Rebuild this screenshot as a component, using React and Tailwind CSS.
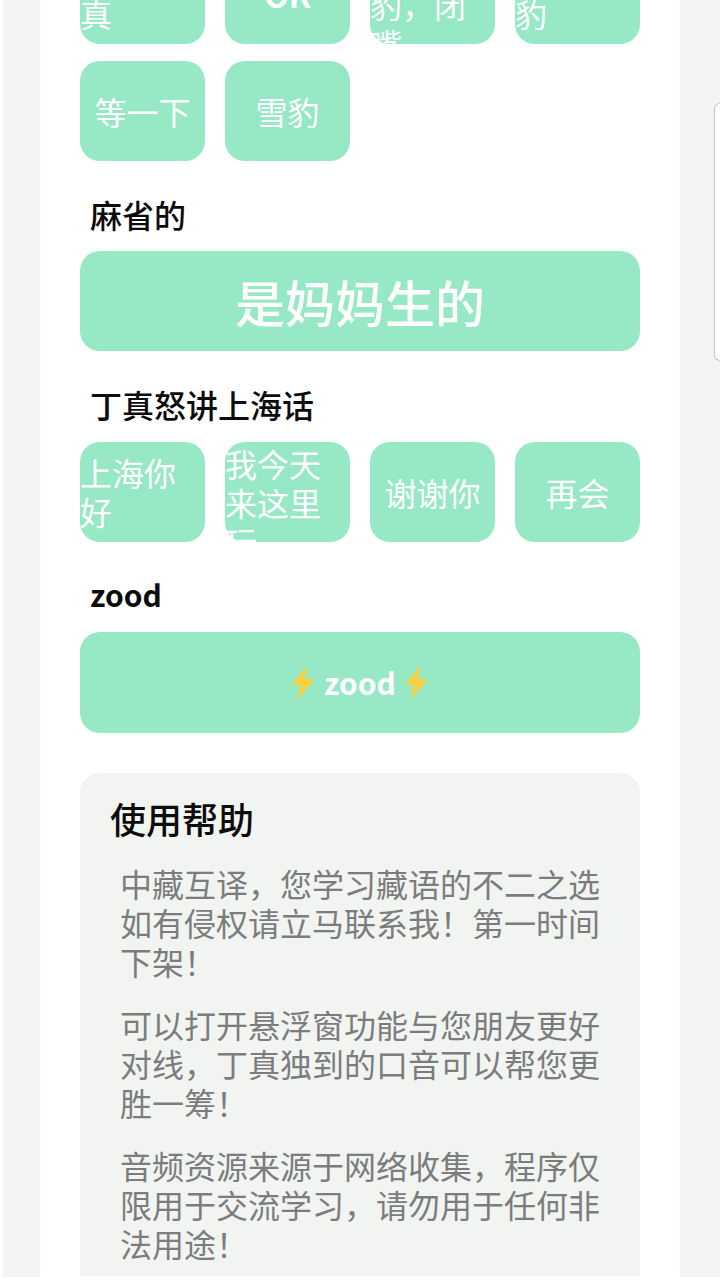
const fontStack = "font-['Noto_Sans_CJK_SC','Noto_Sans',sans-serif]";

const Bolt = () => (
  <svg width="25" height="36" viewBox="0 0 25 36" className="shrink-0">
    <path d="M16 1 L1 20 L10 20 L6 35 L24 14 L14 14 Z" fill="#fbcf3e" />
  </svg>
);

const Tile = ({ children, bold, wrapped }) => (
  <button
    className={`h-[100px] w-full overflow-hidden rounded-[20px] bg-[#97e8c4] py-[2px] text-[32px] leading-[39px] text-white ${wrapped ? 'text-left' : 'text-center'} ${bold ? 'font-bold' : ''}`}
  >
    {children}
  </button>
);

const Section = ({ title, titleClass, children }) => (
  <div>
    <h2 className={`flex items-center pl-[10px] pt-[15px] text-[#0c0c0c] ${titleClass}`}>
      {title}
    </h2>
    {children}
  </div>
);

export default function App() {
  return (
    <div className={`ml-[3px] h-[1277px] overflow-hidden bg-[#f2f4f2] pl-[37px] ${fontStack}`}>
      <div className="flow-root h-[1277px] w-[640px] bg-white px-10">
        {/* page is scrolled, first row is cut by the top edge */}
        <div className="-mt-[56px] grid grid-cols-4 gap-x-5 gap-y-[17px]">
          <Tile wrapped>我是丁真</Tile>
          <Tile bold>OK</Tile>
          <Tile wrapped>我是雪豹，闭嘴</Tile>
          <Tile wrapped>芝士雪豹</Tile>
          <Tile>等一下</Tile>
          <Tile>雪豹</Tile>
        </div>

        <Section title="麻省的" titleClass="h-[90px] text-[32px] font-medium">
          <button className="h-[100px] w-full rounded-[20px] bg-[#97e8c4] text-[50px] font-medium text-white">
            是妈妈生的
          </button>
        </Section>

        <Section title="丁真怒讲上海话" titleClass="h-[91px] text-[32px] font-medium">
          <div className="grid grid-cols-4 gap-x-5">
            <Tile wrapped>上海你好</Tile>
            <Tile wrapped>我今天来这里玩</Tile>
            <Tile>谢谢你</Tile>
            <Tile>再会</Tile>
          </div>
        </Section>

        <Section title="zood" titleClass="h-[90px] text-[30px] font-bold">
          <button className="flex h-[101px] w-full items-center justify-center gap-2 rounded-[20px] bg-[#97e8c4] text-[30px] font-bold text-white">
            <Bolt />
            zood
            <Bolt />
          </button>
        </Section>

        <div className="mt-10 h-[503px] overflow-hidden rounded-t-[20px] bg-[#f2f4f2] pl-[30px] pr-10 pt-[18px]">
          <h3 className="text-[36px] font-medium leading-[54px] text-[#0c0c0c]">使用帮助</h3>
          <div className="mt-[19px] space-y-6 pl-[10px] text-[32px] leading-[39px] text-[#7b7d7c]">
            <p>中藏互译，您学习藏语的不二之选如有侵权请立马联系我！第一时间下架！</p>
            <p>可以打开悬浮窗功能与您朋友更好对线，丁真独到的口音可以帮您更胜一筹！</p>
            <p>音频资源来源于网络收集，程序仅限用于交流学习，请勿用于任何非法用途！</p>
          </div>
        </div>
      </div>
      {/* side handle of the floating window */}
      <div className="fixed right-0 top-[103px] h-[258px] w-[6px] rounded-l-[8px] border border-r-0 border-[#c4c6c5] bg-white" />
    </div>
  );
}
